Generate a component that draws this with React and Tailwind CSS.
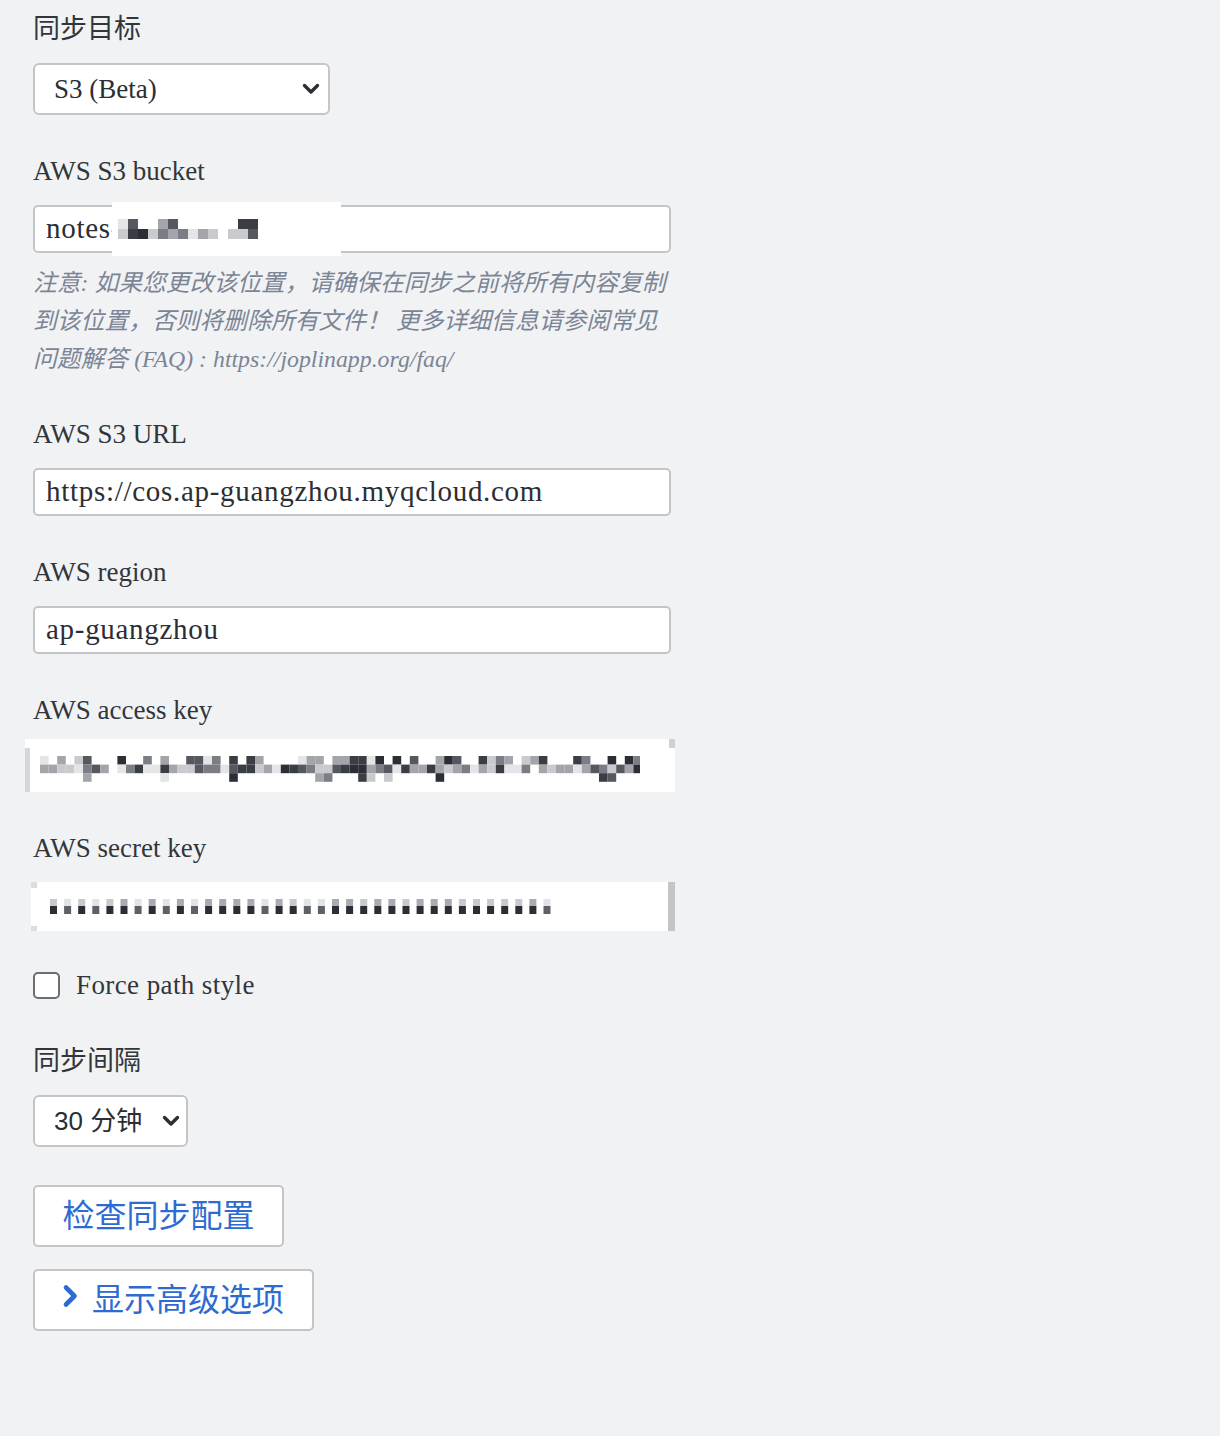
import React from 'react';

// deterministic pseudo random so the pixelated blocks stay the same
const rand = (seed) => {
  let s = seed;
  return () => {
    s = (s * 9301 + 49297) % 233280;
    return s / 233280;
  };
};

const shades = ['#2b2e35', '#3a3d44', '#55585f', '#7a7d83', '#a3a5aa', '#c9cacd', '#e4e5e7'];

const PixelRow = ({ width, height, cols, rows, cell, seed, offsetY = 0, density = 0.7, rowBias = [] }) => {
  const r = rand(seed);
  const rects = [];
  for (let c = 0; c < cols; c++) {
    for (let y = 0; y < rows; y++) {
      const p = rowBias[y] ?? density;
      if (r() < p) {
        const shade = shades[Math.floor(r() * shades.length)];
        rects.push(<rect key={`${c}-${y}`} x={c * cell} y={offsetY + y * cell} width={cell} height={cell} fill={shade} />);
      }
    }
  }
  return (
    <svg width={width} height={height} className="block">
      {rects}
    </svg>
  );
};

const SecretRow = () => {
  const r = rand(17);
  const rects = [];
  for (let i = 0; i < 36; i++) {
    const x = i * 14.1;
    const light = r() < 0.2;
    const top = light ? '#e2e3e5' : r() < 0.5 ? '#a9abb0' : '#c8c9cc';
    rects.push(<rect key={`t${i}`} x={x} y={0} width={7} height={7} fill={top} />);
    rects.push(<rect key={`b${i}`} x={x} y={7} width={7} height={8} fill={light ? '#5d6066' : '#2b2e35'} />);
  }
  return (
    <svg width={510} height={15} className="block">
      {rects}
    </svg>
  );
};

const Label = ({ children }) => (
  <div className="h-[36px] leading-[40px] text-[27px] text-[#32363b] mb-[18px]">{children}</div>
);

const TextInput = ({ children }) => (
  <div className="w-[638px] h-[48px] bg-white border-2 border-[#c4c5c8] rounded-[5px] flex items-center pl-[11px] text-[29px] tracking-[0.7px] text-[#2b2e33] overflow-hidden whitespace-nowrap">
    {children}
  </div>
);

const Chevron = () => (
  <svg width="18" height="12" viewBox="0 0 18 12" className="shrink-0">
    <path d="M2.5 2.5 L9 9 L15.5 2.5" fill="none" stroke="#2b2e33" strokeWidth="3.4" strokeLinecap="round" strokeLinejoin="round" />
  </svg>
);

export default function App() {
  return (
    <div
      className="min-h-screen bg-[#f1f2f4] pl-[33px] pt-[9px] pb-[100px]"
      style={{ fontFamily: '"Liberation Serif", "Noto Sans CJK SC", serif' }}
    >
      {/* 同步目标 */}
      <Label>同步目标</Label>
      <div className="w-[297px] h-[52px] bg-white border-2 border-[#c4c5c8] rounded-[6px] flex items-center justify-between pl-[19px] pr-[8px] text-[27px] text-[#2b2e33]">
        <span>S3 (Beta)</span>
        <Chevron />
      </div>

      {/* bucket */}
      <div className="mt-[36px]">
        <Label>AWS S3 bucket</Label>
        <div className="relative">
          <TextInput>
            <span>notes-</span>
          </TextInput>
          <div className="absolute left-[79px] top-[-3px] w-[229px] h-[54px] bg-white flex items-center pl-[6px]">
            <PixelRow width={140} height={24} cols={14} rows={2} cell={10} seed={5} offsetY={2} rowBias={[0.65, 0.8]} />
          </div>
        </div>
        <p className="mt-[11px] w-[645px] text-[23.8px] leading-[38px] italic text-[#7b8595]">
          注意: 如果您更改该位置，请确保在同步之前将所有内容复制到该位置，否则将删除所有文件！ 更多详细信息请参阅常见问题解答 (FAQ) : https://joplinapp.org/faq/
        </p>
      </div>

      {/* URL */}
      <div className="mt-[36px]">
        <Label>AWS S3 URL</Label>
        <TextInput>https://cos.ap-guangzhou.myqcloud.com</TextInput>
      </div>

      {/* region */}
      <div className="mt-[36px]">
        <Label>AWS region</Label>
        <TextInput>ap-guangzhou</TextInput>
      </div>

      {/* access key */}
      <div className="mt-[36px]">
        <div className="h-[36px] leading-[40px] text-[27px] text-[#32363b] mb-[13px]">AWS access key</div>
        <div className="-ml-[8px] w-[650px] h-[53px] bg-white flex">
          <div className="w-[5px] mt-[9px] bg-[#d6d7d9]" />
          <div className="flex-1 flex items-center pl-[10px]">
            <PixelRow width={600} height={36} cols={70} rows={3} cell={8.6} seed={23} offsetY={8} rowBias={[0.45, 0.95, 0.15]} />
          </div>
          <div className="w-[6px] h-[9px] bg-[#cfd0d2]" />
        </div>
      </div>

      {/* secret key */}
      <div className="mt-[36px]">
        <Label>AWS secret key</Label>
        <div className="-ml-[2px] w-[644px] h-[49px] bg-white flex">
          <div className="w-[6px] flex flex-col justify-between">
            <div className="h-[6px] bg-[#dcdde0]" />
            <div className="h-[5px] bg-[#dcdde0]" />
          </div>
          <div className="flex-1 flex items-center pl-[13px]">
            <SecretRow />
          </div>
          <div className="w-[7px] bg-[#c4c5c8]" />
        </div>
      </div>

      {/* force path style */}
      <div className="mt-[36px] h-[36px] flex items-center">
        <div className="w-[27px] h-[27px] bg-white border-2 border-[#6b6e73] rounded-[5px]" />
        <span className="ml-[16px] text-[27px] tracking-[0.4px] text-[#32363b]">Force path style</span>
      </div>

      {/* 同步间隔 */}
      <div className="mt-[38px]">
        <Label>同步间隔</Label>
        <div className="w-[155px] h-[52px] bg-white border-2 border-[#c4c5c8] rounded-[6px] flex items-center justify-between pl-[19px] pr-[6px] text-[26px] text-[#2b2e33]">
          <span style={{ fontFamily: '"Liberation Sans", "Noto Sans CJK SC", sans-serif' }}>30 分钟</span>
          <Chevron />
        </div>
      </div>

      {/* buttons */}
      <div className="mt-[38px] flex flex-col items-start gap-[22px]">
        <button className="w-[251px] h-[62px] bg-white border-2 border-[#c4c5c8] rounded-[5px] text-[32px] text-[#2d6ad1] flex items-center justify-center">
          检查同步配置
        </button>
        <button className="w-[281px] h-[62px] bg-white border-2 border-[#c4c5c8] rounded-[5px] text-[32px] text-[#2d6ad1] flex items-center pl-[27px]">
          <svg width="17" height="24" viewBox="0 0 17 24" className="mr-[13px] -mt-[8px]">
            <path d="M4 3.5 L12.5 12 L4 20.5" fill="none" stroke="#2d6ad1" strokeWidth="4.6" strokeLinecap="round" strokeLinejoin="round" />
          </svg>
          显示高级选项
        </button>
      </div>
    </div>
  );
}
